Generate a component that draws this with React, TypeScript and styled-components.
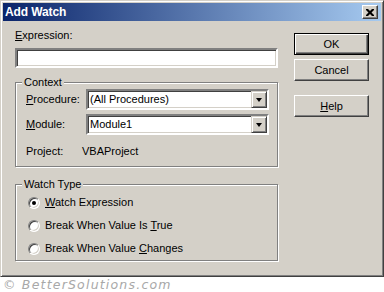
import React from "react";
import styled, { createGlobalStyle } from "styled-components";

const Global = createGlobalStyle`
  html, body { margin: 0; padding: 0; background: #ffffff; }
  body { font-family: "Liberation Sans", Arial, sans-serif; font-size: 11px; }
  * { box-sizing: border-box; }
`;

const Page = styled.div`
  width: 384px;
  height: 292px;
  overflow: hidden;
  background: #ffffff;
`;

const Window = styled.div`
  width: 384px;
  height: 277px;
  background: #d4d0c8;
  border: 1px solid;
  border-color: #d4d0c8 #404040 #404040 #d4d0c8;
  box-shadow: inset 1px 1px #ffffff, inset -1px -1px #808080;
  padding: 2px;
  display: flex;
  flex-direction: column;
`;

const TitleBar = styled.div`
  height: 18px;
  background: linear-gradient(to right, #0a246a, #a6caf0);
  display: flex;
  align-items: center;
  justify-content: space-between;
  padding: 0 3px 0 2px;
`;

const Title = styled.span`
  color: #ffffff;
  font-weight: bold;
  font-size: 12px;
  letter-spacing: -0.1px;
`;

const CloseBtn = styled.div`
  width: 16px;
  height: 14px;
  background: #d4d0c8;
  border: 1px solid;
  border-color: #ffffff #404040 #404040 #ffffff;
  box-shadow: inset -1px -1px #808080;
  display: flex;
  align-items: center;
  justify-content: center;
`;

const Body = styled.div`
  display: flex;
  gap: 16px;
  padding: 8px 0 0 12px;
`;

const LeftCol = styled.div`
  width: 263px;
  display: flex;
  flex-direction: column;
`;

const RightCol = styled.div`
  width: 75px;
  display: flex;
  flex-direction: column;
  padding-top: 4px;
`;

const Label = styled.div`
  height: 13px;
  line-height: 13px;
  color: #000;
  white-space: nowrap;
`;

const Sunken = styled.div`
  background: #ffffff;
  border: 2px solid;
  border-color: #808080 #ffffff #ffffff #808080;
  box-shadow: inset 1px 1px #404040, inset -1px -1px #d4d0c8;
`;

const TextInput = styled(Sunken)`
  height: 20px;
  margin-top: 6px;
`;

const Group = styled.div<{ $mt: number }>`
  position: relative;
  margin-top: ${(p) => p.$mt}px;
  border: 1px solid #808080;
  box-shadow: inset 1px 1px #ffffff, 1px 1px #ffffff;
`;

const Legend = styled.span`
  position: absolute;
  top: -7px;
  left: 6px;
  padding: 0 2px;
  height: 13px;
  line-height: 13px;
  background: #d4d0c8;
  color: #000;
`;

const ContextGrid = styled.div`
  display: grid;
  grid-template-columns: 60px 183px;
  grid-auto-rows: 21px;
  row-gap: 4px;
  align-items: center;
  padding: 6px 0 0 10px;
`;

const ProjectRow = styled.div`
  display: grid;
  grid-template-columns: 56px auto;
  height: 13px;
  line-height: 13px;
  margin: 10px 0 8px 10px;
`;

const Combo = styled(Sunken)`
  height: 21px;
  display: flex;
  align-items: center;
  justify-content: space-between;
  padding-left: 2px;
`;

const ComboText = styled.span`
  line-height: 13px;
  color: #000;
`;

const DropBtn = styled.div`
  width: 16px;
  height: 17px;
  background: #d4d0c8;
  border: 1px solid;
  border-color: #d4d0c8 #404040 #404040 #d4d0c8;
  box-shadow: inset 1px 1px #ffffff, inset -1px -1px #808080;
  display: flex;
  align-items: center;
  justify-content: center;
`;

const Arrow = styled.div`
  width: 0;
  height: 0;
  border-left: 3.5px solid transparent;
  border-right: 3.5px solid transparent;
  border-top: 4px solid #000;
`;

const RadioList = styled.div`
  display: flex;
  flex-direction: column;
  gap: 6px;
  padding: 9px 0 3px 12px;
`;

const RadioRow = styled.div`
  display: flex;
  align-items: center;
  gap: 5px;
  height: 17px;
`;

const Radio = styled.span<{ $on?: boolean }>`
  position: relative;
  width: 12px;
  height: 12px;
  border-radius: 50%;
  background: #ffffff;
  border: 1px solid;
  border-color: #808080 #ffffff #ffffff #808080;
  box-shadow: inset 1px 1px #404040, inset -1px -1px #d4d0c8;
  &::after {
    content: "";
    display: ${(p) => (p.$on ? "block" : "none")};
    position: absolute;
    left: 3px;
    top: 3px;
    width: 4px;
    height: 4px;
    border-radius: 50%;
    background: #000;
  }
`;

const Button = styled.div<{ $default?: boolean; $mt: number }>`
  width: 75px;
  height: 22px;
  margin-top: ${(p) => p.$mt}px;
  background: #d4d0c8;
  display: flex;
  align-items: center;
  justify-content: center;
  color: #000;
  border: 1px solid ${(p) => (p.$default ? "#000" : "transparent")};
  ${(p) =>
    p.$default
      ? "box-shadow: inset 1px 1px #ffffff, inset -1px -1px #404040, inset -2px -2px #808080;"
      : "border-color: #ffffff #404040 #404040 #ffffff; box-shadow: inset -1px -1px #808080;"}
`;

const Watermark = styled.div`
  height: 15px;
  padding-left: 3px;
  line-height: 15px;
  font-family: "DejaVu Sans", sans-serif;
  font-style: italic;
  font-size: 12.5px;
  letter-spacing: 1.2px;
  color: #a8a8a8;
  white-space: nowrap;
`;

const U = styled.u`
  text-decoration: underline;
  text-underline-offset: 1px;
`;

export default function App() {
  return (
    <Page>
      <Global />
      <Window>
        <TitleBar>
          <Title>Add Watch</Title>
          <CloseBtn>
            <svg width="8" height="7" viewBox="0 0 8 7">
              <path d="M0 0h2l2 2 2-2h2v1L5.5 3.5 8 6v1H6L4 5 2 7H0V6l2.5-2.5L0 1z" fill="#000" />
            </svg>
          </CloseBtn>
        </TitleBar>
        <Body>
          <LeftCol>
            <Label>
              <U>E</U>xpression:
            </Label>
            <TextInput />
            <Group $mt={14}>
              <Legend>Context</Legend>
              <ContextGrid>
                <Label>
                  <U>P</U>rocedure:
                </Label>
                <Combo>
                  <ComboText>(All Procedures)</ComboText>
                  <DropBtn>
                    <Arrow />
                  </DropBtn>
                </Combo>
                <Label>
                  <U>M</U>odule:
                </Label>
                <Combo>
                  <ComboText>Module1</ComboText>
                  <DropBtn>
                    <Arrow />
                  </DropBtn>
                </Combo>
              </ContextGrid>
              <ProjectRow>
                <span>Project:</span>
                <span>VBAProject</span>
              </ProjectRow>
            </Group>
            <Group $mt={17}>
              <Legend>Watch Type</Legend>
              <RadioList>
                <RadioRow>
                  <Radio $on />
                  <Label>
                    <U>W</U>atch Expression
                  </Label>
                </RadioRow>
                <RadioRow>
                  <Radio />
                  <Label>
                    Break When Value Is <U>T</U>rue
                  </Label>
                </RadioRow>
                <RadioRow>
                  <Radio />
                  <Label>
                    Break When Value <U>C</U>hanges
                  </Label>
                </RadioRow>
              </RadioList>
            </Group>
          </LeftCol>
          <RightCol>
            <Button $default $mt={0}>OK</Button>
            <Button $mt={4}>Cancel</Button>
            <Button $mt={14}>
              <span>
                <U>H</U>elp
              </span>
            </Button>
          </RightCol>
        </Body>
      </Window>
      <Watermark>© BetterSolutions.com</Watermark>
    </Page>
  );
}
